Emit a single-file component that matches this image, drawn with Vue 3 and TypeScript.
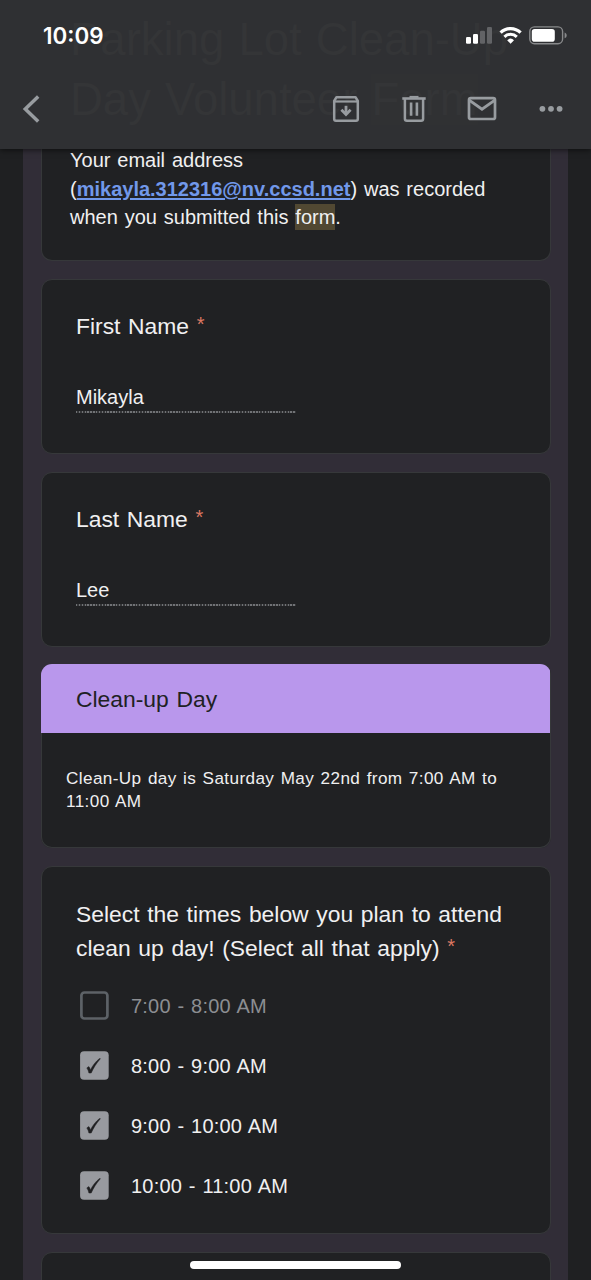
<script setup lang="ts">
interface NameField {
  label: string
  value: string
}

interface TimeSlot {
  label: string
  checked: boolean
}

const fields: NameField[] = [
  { label: 'First Name', value: 'Mikayla' },
  { label: 'Last Name', value: 'Lee' },
]

const slots: TimeSlot[] = [
  { label: '7:00 - 8:00 AM', checked: false },
  { label: '8:00 - 9:00 AM', checked: true },
  { label: '9:00 - 10:00 AM', checked: true },
  { label: '10:00 - 11:00 AM', checked: true },
]
</script>

<template>
  <div class="screen">
    <header class="topbar">
      <div class="ghost" aria-hidden="true">Parking Lot Clean-Up<br />Day Volunteer <span class="ghost-mark">Form</span></div>
      <div class="status">
        <span class="clock">10:09</span>
        <svg class="indicators" width="104" height="24" viewBox="0 0 104 24">
          <rect x="1" y="13" width="5" height="6.7" rx="1.2" fill="#fff" />
          <rect x="8" y="10" width="5" height="9.7" rx="1.2" fill="#fff" />
          <rect x="15" y="6.8" width="5" height="12.9" rx="1.2" fill="#626366" />
          <rect x="22" y="3" width="5" height="16.7" rx="1.2" fill="#626366" />
          <path d="M35.6 8.6a14.4 14.4 0 0 1 20 0" fill="none" stroke="#fff" stroke-width="3.3" />
          <path d="M39.4 12.8a9 9 0 0 1 12.4 0" fill="none" stroke="#fff" stroke-width="3" />
          <path d="M42.2 16.2a5 5 0 0 1 6.8 0l-3.4 3.6z" fill="#fff" />
          <rect x="64.8" y="2.9" width="32.8" height="16.8" rx="4.6" fill="none" stroke="#88898b" stroke-width="1.4" />
          <rect x="66.8" y="4.9" width="23" height="12.8" rx="2.8" fill="#fff" />
          <path d="M99.6 8.5c2.8.8 2.8 5 0 5.8z" fill="#88898b" />
        </svg>
      </div>
      <nav class="toolbar">
        <svg class="back" width="20" height="30" viewBox="0 0 20 30">
          <path d="M17.2 2.6L4.3 15l12.9 12.4" fill="none" stroke="#989ca0" stroke-width="3.5" />
        </svg>
        <div class="actions">
          <svg width="28" height="28" viewBox="0 0 28 28" fill="none" stroke="#989ca0">
            <path d="M2.2 7.2V24a1.7 1.7 0 0 0 1.7 1.7h20.2a1.7 1.7 0 0 0 1.7-1.7V6L23.5 2.2h-19L2.2 6z" stroke-width="2.5" stroke-linejoin="round" />
            <path d="M2.5 6.5h23" stroke-width="2.2" />
            <path d="M14 10.8v7" stroke-width="2.8" />
            <path d="M9.4 14.8l4.6 4.6 4.6-4.6" stroke-width="2.8" />
          </svg>
          <svg width="28" height="28" viewBox="0 0 28 28" fill="none" stroke="#989ca0">
            <path d="M4.9 4v19.8a2 2 0 0 0 2 2h14.2a2 2 0 0 0 2-2V4" stroke-width="2.5" />
            <path d="M2.3 3.5h23.4" stroke-width="2.6" />
            <path d="M9.5 1.9h9" stroke-width="2" />
            <path d="M11.1 7.5v13.2M16.9 7.5v13.2" stroke-width="2.6" />
          </svg>
          <svg width="30" height="28" viewBox="0 0 30 28" fill="none" stroke="#989ca0">
            <rect x="2" y="3.2" width="26" height="20.8" rx="1.8" stroke-width="2.7" />
            <path d="M2.5 5.4L15 14.2l12.5-8.8" stroke-width="2.9" />
          </svg>
          <svg width="26" height="28" viewBox="0 0 26 28" fill="#989ca0">
            <circle cx="4.4" cy="13.8" r="2.9" />
            <circle cx="13" cy="13.8" r="2.9" />
            <circle cx="21.6" cy="13.8" r="2.9" />
          </svg>
        </div>
      </nav>
    </header>

    <main class="form">
      <section class="card notice">
        <p>
          Your email address<br />
          (<a class="mail">mikayla.312316@nv.ccsd.net</a>) was recorded<br />
          when you submitted this <mark>form</mark>.
        </p>
      </section>

      <section v-for="field in fields" :key="field.label" class="card field">
        <h2 class="question">{{ field.label }} <sup class="star">*</sup></h2>
        <div class="value">{{ field.value }}</div>
      </section>

      <section class="card info">
        <h2 class="banner">Clean-up Day</h2>
        <p class="details">Clean-Up day is Saturday May 22nd from 7:00 AM to<br />11:00 AM</p>
      </section>

      <section class="card times">
        <h2 class="question">Select the times below you plan to attend<br />clean up day! (Select all that apply) <sup class="star">*</sup></h2>
        <ul class="slots">
          <li v-for="slot in slots" :key="slot.label" class="slot" :class="{ checked: slot.checked }">
            <svg class="box" width="29" height="29" viewBox="0 0 29 29">
              <template v-if="slot.checked">
                <rect x="0.1" y="0.2" width="28.6" height="28.6" rx="4" fill="#989a9f" />
                <path d="M6.8 16.9l2.1-1.3c.8 1 1.2 2.2 1.5 3.5C12.6 14.5 15.7 10.5 19.5 7.5l.9.2C16.6 12 13.6 16.6 11.2 22H8.9C8.5 19.9 7.8 18.3 6.8 16.9z" fill="#202123" stroke="#202123" stroke-width="0.5" />
              </template>
              <rect v-else x="1.4" y="1.5" width="26" height="26" rx="3" fill="none" stroke="#5d6267" stroke-width="2.7" />
            </svg>
            <span>{{ slot.label }}</span>
          </li>
        </ul>
      </section>

      <section class="card next"></section>
    </main>

    <div class="home-indicator"></div>
  </div>
</template>

<style>
body {
  margin: 0;
  background: #1f2022;
}
</style>

<style scoped>
.screen {
  position: relative;
  display: flex;
  flex-direction: column;
  width: 591px;
  height: 1280px;
  overflow: hidden;
  background: #1f2022;
  color: #f0f0f1;
  font-family: "Liberation Sans", Arial, sans-serif;
}

.topbar {
  position: relative;
  z-index: 1;
  flex: none;
  box-sizing: border-box;
  height: 149px;
  padding-top: 23px;
  background: #2f3033;
  box-shadow: 0 1px 6px rgba(0, 0, 0, 0.6);
}

.ghost {
  position: absolute;
  top: 10px;
  left: 70px;
  color: #343537;
  font-size: 45.5px;
  line-height: 60px;
  word-spacing: 1.5px;
  white-space: nowrap;
}

.ghost-mark {
  background: #303133;
}

.status {
  position: relative;
  display: flex;
  justify-content: space-between;
  height: 26px;
  padding: 0 22px 0 43px;
}

.clock {
  color: #fff;
  font: 600 22.4px/26px Inter, sans-serif;
}

.indicators {
  margin-top: 1px;
}

.toolbar {
  position: relative;
  display: flex;
  align-items: center;
  justify-content: space-between;
  height: 30px;
  margin-top: 45px;
  padding: 0 27px 0 21px;
}

.toolbar svg {
  display: block;
}

.actions {
  display: flex;
  gap: 40px;
}

.actions svg:nth-child(1) {
  margin-right: 0.5px;
}

.actions svg:nth-child(2) {
  margin-right: -1px;
}

.actions svg:nth-child(3) {
  margin-right: 1px;
}

.form {
  display: flex;
  flex: 1;
  flex-direction: column;
  gap: 18px;
  min-height: 0;
  margin: 0 23px;
  padding: 0 17.5px 0 18px;
  overflow: hidden;
  background: #312d37;
}

.card {
  flex: none;
  box-sizing: border-box;
  overflow: hidden;
  border: 1px solid #36383a;
  border-radius: 11px;
  background: #202123;
}

.notice {
  height: 112px;
  border-top: 0;
  border-radius: 0 0 11px 11px;
}

.notice p {
  margin: -3px 0 0;
  padding-left: 28px;
  font-size: 20px;
  line-height: 28.6px;
  word-spacing: 1.3px;
  white-space: nowrap;
}

.mail {
  color: #7198ea;
  font-weight: 700;
  text-decoration: underline;
  text-decoration-thickness: 1.6px;
  text-underline-offset: 2px;
}

mark {
  padding: 2px 0;
  background: #514832;
  color: inherit;
}

.field {
  height: 175px;
  padding: 29px 34px 0;
}

.question {
  margin: 0;
  font-size: 22.86px;
  font-weight: 400;
  line-height: 34.3px;
  word-spacing: 1.3px;
  white-space: nowrap;
}

.star {
  color: #dc7862;
  font-size: 20px;
  line-height: 0;
  vertical-align: 3.5px;
}

.value {
  box-sizing: border-box;
  width: 220px;
  height: 34px;
  margin-top: 36px;
  background: repeating-linear-gradient(90deg, #707275 0 1.43px, #343537 1.43px 2.86px) left bottom / 100% 2px no-repeat;
  font-size: 20px;
  line-height: 36px;
}

.info {
  height: 184px;
  margin-top: -1px;
  border: 0;
  box-shadow: inset 0 0 0 1px #36383a;
}

.banner {
  height: 69px;
  margin: 0 0.5px 0 0;
  padding-left: 35px;
  background: #b997ec;
  color: #202123;
  font-size: 22.86px;
  font-weight: 400;
  line-height: 71px;
  word-spacing: 1.3px;
}

.details {
  margin: 34px 0 0;
  padding-left: 25px;
  font-size: 17.14px;
  line-height: 22.86px;
  letter-spacing: 0.4px;
  word-spacing: 1.2px;
  white-space: nowrap;
}

.times {
  height: 368px;
  padding: 30px 34px 0;
}

.slots {
  display: grid;
  grid-auto-rows: 60px;
  margin: 11px 0 0;
  padding: 0;
  list-style: none;
}

.slot {
  display: flex;
  align-items: center;
  gap: 22px;
  padding-left: 4px;
  color: #8c8e92;
  font-size: 20px;
  letter-spacing: 0.2px;
  word-spacing: 1px;
}

.box {
  display: block;
  margin-top: -3px;
}

.checked {
  color: #f0f0f1;
}

.next {
  height: 120px;
}

.home-indicator {
  position: absolute;
  z-index: 2;
  bottom: 11px;
  left: 190px;
  width: 211px;
  height: 8px;
  border-radius: 4px;
  background: #fff;
}
</style>
